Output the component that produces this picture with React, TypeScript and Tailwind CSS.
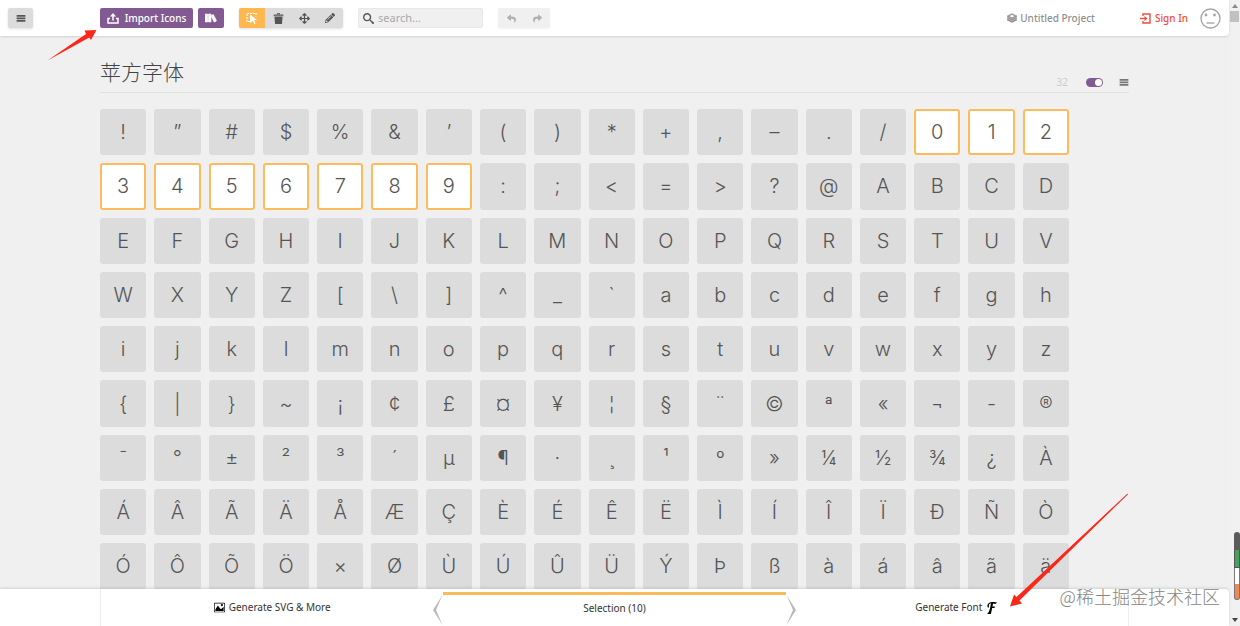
import { useState } from 'react';
import clsx from 'clsx';
import { ImBin2, ImBooks, ImFont, ImImage, ImMenu, ImSearch, ImStack } from 'react-icons/im';
import { FaArrowsAlt, FaPencilAlt, FaReply, FaShare } from 'react-icons/fa';

const rows = [
  '!”#$%&’()*+,–./012',
  '3456789:;<=>?@ABCD',
  'EFGHIJKLMNOPQRSTUV',
  'WXYZ[\\]^_`abcdefgh',
  'ijklmnopqrstuvwxyz',
  '{|}~¡¢£¤¥¦§¨©ª«¬-®',
  '¯°±²³´µ¶·¸¹º»¼½¾¿À',
  'ÁÂÃÄÅÆÇÈÉÊËÌÍÎÏÐÑÒ',
  'ÓÔÕÖ×ØÙÚÛÜÝÞßàáâãä',
];
const glyphs = Array.from(rows.join(''));

function ImportIcon() {
  return (
    <svg viewBox="0 0 24 22" className="h-[11px] w-3" fill="none" stroke="currentColor" strokeWidth="3">
      <path d="M6 11H2v9h20v-9h-4" />
      <path d="M12 15V5" />
      <path d="M12 0l6 7H6z" fill="currentColor" stroke="none" />
    </svg>
  );
}

function SelectIcon() {
  return (
    <svg viewBox="0 0 24 24" className="size-3" fill="none" stroke="currentColor">
      <path d="M8 19H2V3h18v6" strokeWidth="2.4" strokeDasharray="4 1.6" />
      <path d="M8 5l14 11-6 .8 3.6 6-3 1.2-3.2-6L8 22z" fill="currentColor" stroke="none" />
    </svg>
  );
}

function SignInIcon() {
  return (
    <svg viewBox="0 0 22 22" className="size-[11px]" fill="none" stroke="currentColor" strokeWidth="2.8">
      <path d="M6 6V2h14v18H6v-4" />
      <path d="M0 11h11" />
      <path d="M9 6l6 5-6 5z" fill="currentColor" stroke="none" />
    </svg>
  );
}

function NeutralFace() {
  return (
    <svg viewBox="0 0 42 42" className="size-[21px]" fill="none" stroke="#a6a6a6" strokeWidth="2.8">
      <circle cx="21" cy="21" r="19" />
      <path d="M13 30h16" />
      <circle cx="12" cy="14" r="2.8" fill="#a6a6a6" stroke="none" />
      <circle cx="29" cy="14" r="2.8" fill="#a6a6a6" stroke="none" />
    </svg>
  );
}

function Header({ tool, onTool }: { tool: string; onTool: (t: string) => void }) {
  const tools = [
    { id: 'select', label: 'Select', icon: <SelectIcon /> },
    { id: 'delete', label: 'Delete', icon: <ImBin2 className="size-[11px]" /> },
    { id: 'move', label: 'Move', icon: <FaArrowsAlt className="size-[11px]" /> },
    { id: 'edit', label: 'Edit', icon: <FaPencilAlt className="size-[10px]" /> },
  ];

  return (
    <header className="relative z-10 flex h-9 shrink-0 items-center rounded-br bg-white pr-2 shadow">
      <div className="w-[100px] shrink-0 pl-2">
        <button aria-label="Menu" className="flex h-5 w-[25px] items-center justify-center rounded-xs bg-[#dcdcdc] text-[#555] shadow-sm">
          <ImMenu className="size-[10px]" />
        </button>
      </div>

      <button className="flex h-5 w-[93px] shrink-0 items-center justify-center gap-1.5 rounded-xs bg-[#825a92] text-[10px] font-medium text-white">
        <ImportIcon />
        Import Icons
      </button>
      <button aria-label="Library" className="ml-[5px] flex h-5 w-[26px] shrink-0 items-center justify-center rounded-xs bg-[#825a92] text-white">
        <ImBooks className="size-3" stroke="currentColor" strokeWidth="1" />
      </button>

      <div className="ml-[15px] flex shrink-0 overflow-hidden rounded-xs bg-[#dcdcdc] shadow-sm">
        {tools.map((t) => (
          <button
            key={t.id}
            aria-label={t.label}
            onClick={() => onTool(t.id)}
            className={clsx(
              'flex h-5 w-[26px] items-center justify-center',
              tool === t.id ? 'bg-[#ffb84d] text-white' : 'text-[#555]'
            )}
          >
            {t.icon}
          </button>
        ))}
      </div>

      <label className="ml-[15px] flex h-5 w-[125px] items-center gap-1 rounded-xs border border-[#e8e8e8] bg-[#f0f0f0] px-1 text-[#555]">
        <ImSearch className="size-[11px] shrink-0" />
        <input
          type="text"
          aria-label="Search icons"
          placeholder="search..."
          className="min-w-0 flex-1 bg-transparent text-[11px] outline-none placeholder:text-[#aaa]"
        />
      </label>

      <div className="ml-[15px] flex shrink-0 rounded-xs bg-[#f0f0f0] text-[#b0b0b0] shadow-xs">
        <button aria-label="Undo" className="flex h-5 w-[26px] items-center justify-center">
          <FaReply className="size-[9px]" />
        </button>
        <button aria-label="Redo" className="flex h-5 w-[26px] items-center justify-center">
          <FaShare className="size-[9px]" />
        </button>
      </div>

      <div className="ml-auto flex items-center text-[10px]">
        <a href="#projects" className="flex items-center gap-[3px] font-medium text-[#8f8f8f]">
          <ImStack className="size-[10px]" stroke="currentColor" strokeWidth="1" />
          Untitled Project
        </a>
        <a href="#signin" className="ml-[45px] flex items-center gap-1 font-medium text-[#f04c3e]">
          <SignInIcon />
          Sign In
        </a>
        <button aria-label="Account" className="ml-3">
          <NeutralFace />
        </button>
      </div>
    </header>
  );
}

function SetHeader() {
  const [on, setOn] = useState(true);

  return (
    <div className="flex h-[57px] items-end border-b border-[#e2e2e2]">
      <h1 className="pb-1.5 text-[21px] leading-7 font-light text-[#444]">苹方字体</h1>
      <div className="ml-auto flex h-5 items-center">
        <span className="text-[10px] text-[#ccc]">32</span>
        <label className="ml-[18px] flex h-[9px] w-[17px] items-center justify-end rounded-full bg-[#825a92] p-px has-not-checked:justify-start">
          <input
            type="checkbox"
            aria-label="Show set"
            checked={on}
            onChange={(e) => setOn(e.target.checked)}
            className="size-[7px] appearance-none rounded-full bg-white"
          />
        </label>
        <button aria-label="Set menu" className="ml-4 text-[#777]">
          <ImMenu className="size-[10px]" />
        </button>
      </div>
    </div>
  );
}

function Footer({ count }: { count: number }) {
  return (
    <footer className="absolute inset-x-0 bottom-0 rounded-tr bg-white/97 px-[100px] text-[10px] text-[#333] shadow-[0_-1px_3px_rgba(0,0,0,0.12)]">
      <div className="grid h-[37px] grid-cols-3 border-x border-[#ececec]">
        <button className="flex items-center justify-center gap-1">
          <ImImage className="size-[11px] text-black" />
          Generate SVG &amp; More
        </button>
        <div className="relative mt-[3px]">
          <button className="flex h-[34px] w-full items-center justify-center border-t-[3px] border-[#f8bb5c] pb-1">
            Selection ({count})
          </button>
          <svg viewBox="0 0 10 30" className="absolute top-[3px] right-full h-[30px] w-[10px]" fill="#b8b8b8">
            <path d="M9.5 0L0 15l9.500 15L3 15z" />
          </svg>
          <svg viewBox="0 0 10 30" className="absolute top-[3px] left-full h-[30px] w-[10px]" fill="#b8b8b8">
            <path d="M.5 0L10 15 .5 30 7 15z" />
          </svg>
        </div>
        <button className="flex items-center justify-center gap-1">
          Generate Font
          <ImFont className="size-3 text-black" />
        </button>
      </div>
    </footer>
  );
}

function ScrollTrack() {
  return (
    <div className="flex w-[11px] shrink-0 flex-col items-center bg-[#f1f1f1] py-1">
      <svg viewBox="0 0 6 4" className="h-1 w-1.5" fill="#888">
        <path d="M3 0l3 4H0z" />
      </svg>
      <div className="mt-[3px] h-[11px] w-[9px] bg-[#c1c1c1]" />
      <div className="mt-auto mb-[18px] h-[68px] w-1.5 self-end">
        <div className="h-[18px] rounded-t-full bg-[#5b5b5b]" />
        <div className="h-[18px] border-x border-b border-[#555] bg-[#45a25c]" />
        <div className="h-4 border-x border-[#777] bg-white" />
        <div className="h-4 rounded-b-sm border-x border-b border-[#777] bg-[#f08a55]" />
      </div>
      <svg viewBox="0 0 6 4" className="h-1 w-1.5" fill="#444">
        <path d="M3 4l3-4H0z" />
      </svg>
    </div>
  );
}

export default function App() {
  const [tool, setTool] = useState('select');
  const [selected, setSelected] = useState<string[]>(Array.from('0123456789'));

  const toggle = (g: string) => {
    setSelected((prev) => (prev.includes(g) ? prev.filter((s) => s !== g) : [...prev, g]));
  };

  return (
    <div className="relative flex h-screen overflow-hidden bg-[#f0f0f0] font-['Noto_Sans','Noto_Sans_CJK_SC',sans-serif]">
      <div className="relative flex min-w-0 flex-1 flex-col">
        <Header tool={tool} onTool={setTool} />

        <main className="min-h-0 flex-1 overflow-hidden px-[100px]">
          <SetHeader />
          <div className="mt-4 mr-[60px] grid grid-cols-18 gap-2 font-['Inter','Liberation_Sans',sans-serif] text-[20px] font-light text-[#555]">
            {glyphs.map((g) => {
              const active = selected.includes(g);
              return (
                <button
                  key={g}
                  aria-pressed={active}
                  onClick={() => toggle(g)}
                  className={clsx(
                    'flex aspect-square min-w-0 items-center justify-center rounded-[3px] leading-none',
                    active ? 'border-2 border-[#fdbc5c] bg-white' : 'bg-[#dcdcdc]'
                  )}
                >
                  {g}
                </button>
              );
            })}
          </div>
        </main>

        <Footer count={selected.length} />
      </div>

      <ScrollTrack />

      {/* Pointer arrows */}
      <svg viewBox="0 0 50 32" className="pointer-events-none absolute top-[29px] left-[47px] z-20 h-8 w-[50px]" fill="#fb2819">
        <path d="M49.500 1L37.500 1.500l1.500 3.500L.5 31.500 42.300 8.500l1.700 2.500z" />
      </svg>
      <svg viewBox="0 0 120 114" className="pointer-events-none absolute right-[111px] bottom-[19px] z-20 h-[114px] w-[120px]" fill="#fb2819">
        <path d="M1 113.500L5 101.500l2.500 2.500L118.500 0.500l.5.700L10.500 107.500l2.500 3z" />
      </svg>

      <p className="pointer-events-none absolute right-5 bottom-4 z-20 font-['Noto_Sans_CJK_SC',sans-serif] text-[18px] font-light text-[#858585] [text-shadow:0_0_2px_#fff]">
        @稀土掘金技术社区
      </p>
    </div>
  );
}
